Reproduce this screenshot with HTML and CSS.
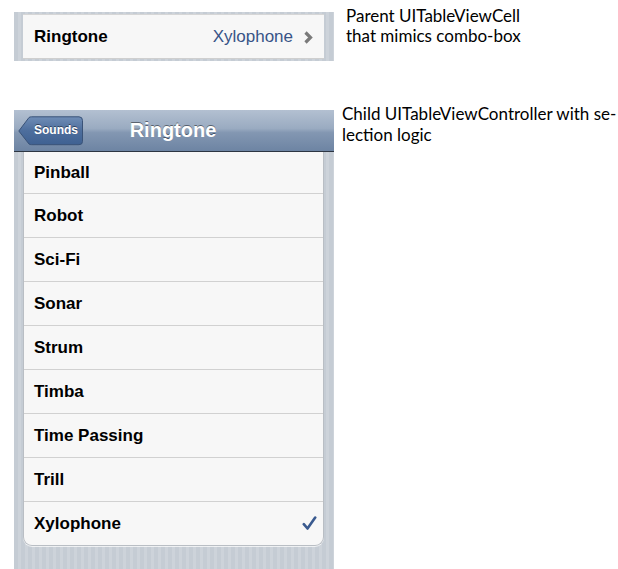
FILE: index.html
```html
<!DOCTYPE html>
<html>
<head>
<meta charset="utf-8">
<link rel="stylesheet" href="styles.css">
</head>
<body>
<div class="page">
  <section class="sec sec-top">
    <div class="panel panel-top">
      <div class="cell combo">
        <span class="label">Ringtone</span>
        <span class="value">Xylophone</span>
        <svg class="chev" width="9" height="13" viewBox="0 0 9 13"><path d="M1.5 1.5 L6.5 6.5 L1.5 11.5" fill="none" stroke="#7a7a7a" stroke-width="3.2" stroke-linejoin="miter"/></svg>
      </div>
    </div>
    <p class="note note-top">Parent UITableViewCell<br>that mimics combo-box</p>
  </section>

  <section class="sec sec-bottom">
    <div class="panel panel-bottom">
      <div class="navbar">
        <div class="back">
          <svg class="back-shape" width="66" height="30" viewBox="0 0 66 30">
            <defs>
              <linearGradient id="bg" x1="0" y1="0" x2="0" y2="1">
                <stop offset="0" stop-color="#6f8db6"/>
                <stop offset="0.5" stop-color="#4d6e9d"/>
                <stop offset="1" stop-color="#3f6192"/>
              </linearGradient>
            </defs>
            <path d="M0.8 15 L11 1.5 Q12 0.8 13.5 0.8 L61 0.8 Q64.5 0.8 64.5 4.5 L64.5 25.5 Q64.5 28.7 61 28.7 L13.5 28.7 Q12 28.7 11 28 Z" fill="url(#bg)" stroke="#3a5378" stroke-width="1"/>
          </svg>
          <span class="back-text">Sounds</span>
        </div>
        <div class="title">Ringtone</div>
      </div>
      <div class="group">
        <div class="row first">Pinball</div>
        <div class="row">Robot</div>
        <div class="row">Sci-Fi</div>
        <div class="row">Sonar</div>
        <div class="row">Strum</div>
        <div class="row">Timba</div>
        <div class="row">Time Passing</div>
        <div class="row">Trill</div>
        <div class="row last">Xylophone
          <svg class="check" width="15" height="15" viewBox="0 0 15 15"><path d="M1.8 8.2 L5.5 12.5 L13.2 1.5" fill="none" stroke="#3a5a8f" stroke-width="2.6" stroke-linecap="round" stroke-linejoin="round"/></svg>
        </div>
      </div>
    </div>
    <p class="note note-bottom">Child UITableViewController with se-<br>lection logic</p>
  </section>
</div>
</body>
</html>
```

FILE: styles.css
```css
html, body {
  margin: 0;
  padding: 0;
  background: #ffffff;
}

body {
  width: 618px;
  height: 569px;
  overflow: hidden;
}

.page {
  padding-top: 12px;
  padding-left: 14px;
}

.sec {
  display: flex;
  align-items: flex-start;
}

.panel {
  width: 320px;
  box-sizing: border-box;
  background: repeating-linear-gradient(90deg, #c5ccd4 0px, #c5ccd4 4px, #cdd3da 4px, #cdd3da 7px);
  flex-shrink: 0;
}

.panel-top {
  padding: 2px 10px 2px 9px;
}

.cell {
  background: #f7f7f7;
  font-family: "Liberation Sans", Arial, sans-serif;
}

.combo {
  height: 45px;
  box-sizing: border-box;
  border-top: 1px solid #d6d6d6;
  border-bottom: 1px solid #cfcfcf;
  display: flex;
  align-items: center;
  padding: 0 11px 0 11px;
}

.label {
  font-weight: bold;
  font-size: 17px;
  color: #000;
  flex: 1;
}

.value {
  font-size: 17px;
  color: #385487;
  margin-right: 11px;
}

.chev {
  display: block;
  margin-top: 1px;
}

.note {
  margin: 0;
  font-family: Lato, "Open Sans", sans-serif;
  font-size: 17px;
  line-height: 20px;
  color: #000;
}

.note-top {
  margin-left: 12px;
  margin-top: -6px;
}

.sec-bottom {
  margin-top: 49px;
}

.note-bottom {
  margin-left: 8px;
  margin-top: -7px;
  line-height: 21px;
}

.panel-bottom {
  height: 459px;
}

.navbar {
  position: relative;
  height: 42px;
  box-sizing: border-box;
  background: linear-gradient(#b3c0d1 0%, #9aabc1 45%, #8397b2 55%, #6d84a3 100%);
  border-bottom: 1px solid #2d3642;
  display: flex;
  align-items: center;
  justify-content: center;
}

.back {
  position: absolute;
  left: 4px;
  top: 6px;
  width: 66px;
  height: 30px;
}

.back-shape {
  position: absolute;
  left: 0;
  top: 0;
}

.back-text {
  position: absolute;
  left: 13px;
  top: 0;
  width: 50px;
  line-height: 29px;
  text-align: center;
  font-family: "Liberation Sans", Arial, sans-serif;
  font-weight: bold;
  font-size: 12px;
  color: #fff;
  text-shadow: 0 -1px 0 rgba(0, 0, 0, 0.45);
}

.title {
  font-family: "Liberation Sans", Arial, sans-serif;
  font-weight: bold;
  font-size: 20px;
  color: #fff;
  text-shadow: 0 -1px 0 rgba(0, 0, 0, 0.45);
  margin-left: -2px;
  margin-top: 0;
}

.group {
  margin: 0 10px 0 9px;
  background: #f7f7f7;
  border: 1px solid #b9bec4;
  border-top: none;
  border-radius: 0 0 9px 9px;
  box-shadow: 0 1px 0 rgba(255, 255, 255, 0.7);
}

.row {
  height: 44px;
  box-sizing: border-box;
  border-bottom: 1px solid #d1d1d1;
  display: flex;
  align-items: center;
  padding: 0 10px;
  font-family: "Liberation Sans", Arial, sans-serif;
  font-weight: bold;
  font-size: 17px;
  color: #000;
}

.row.first {
  height: 42px;
  padding-top: 1px;
}

.row.last {
  border-bottom: none;
  height: 43px;
  justify-content: space-between;
}

.check {
  display: block;
  margin-right: -4px;
}
```
